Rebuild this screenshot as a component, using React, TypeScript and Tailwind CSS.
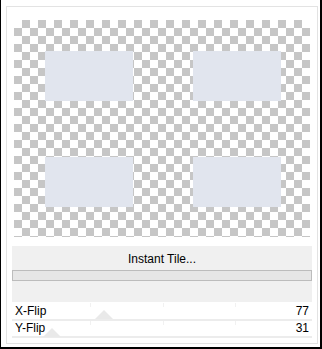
import React from 'react';

const Thumb = ({ x, y }: { x: number; y: number }) => (
  <svg className="absolute" style={{ left: x, top: y }} width="18" height="10" viewBox="0 0 18 10">
    <polygon points="0,10 9,1 18,10" fill="#e9e9e9" />
  </svg>
);

const Tick = ({ x, y }: { x: number; y: number }) => (
  <div className="absolute w-px h-[4px] bg-[#f1f1f1]" style={{ left: x, top: y }} />
);

const Row = ({ label, value, first }: { label: string; value: number; first?: boolean }) => (
  <>
    <div className={`flex justify-between pl-[3px] pr-[3px] leading-[15px] ${first ? 'h-[17px] pt-[2px]' : 'h-[15px]'}`}>
      <span className="relative">{label}</span>
      <span className="relative">{value}</span>
    </div>
    <div className="h-[2px] bg-[#ececec]" />
  </>
);

export default function App() {
  const ticks = [78, 151, 223];
  return (
    <div
      className="w-[322px] h-[349px] bg-white border-l border-r-2 border-b-2 border-black pl-[5px] pt-[6px] text-[12px] text-black"
      style={{ fontFamily: '"Liberation Sans", Arial, sans-serif' }}
    >
      <div className="w-[312px] h-[338px] border border-[#e3e3e3]">
        <div className="ml-[7px] mt-[13px] w-[296px] h-[217px] bg-[conic-gradient(#c6c6c6_25%,#ffffff_0_50%,#c6c6c6_0_75%,#ffffff_0)] bg-[length:16px_16px] pl-[31px] pt-[31px]">
          <div className="grid grid-cols-[88px_88px] gap-x-[60px] gap-y-[56px]">
            <div className="h-[50px] bg-[#e1e5ee]" />
            <div className="h-[50px] bg-[#e1e5ee]" />
            <div className="h-[50px] bg-[#e1e5ee]" />
            <div className="h-[50px] bg-[#e1e5ee]" />
          </div>
        </div>

        <div className="ml-[5px] mt-[9px] w-[300px] h-[56px] bg-[#f0f0f0]">
          <div className="h-[24px] flex items-center justify-center pt-[1px]">Instant Tile...</div>
          <div className="h-[11px] bg-[#e6e6e6] border border-[#bcbcbc]" />
        </div>

        <div className="relative ml-[5px] w-[300px]">
          {ticks.map((t) => (
            <Tick key={'a' + t} x={t} y={1} />
          ))}
          {ticks.map((t) => (
            <Tick key={'b' + t} x={t} y={19} />
          ))}
          <Thumb x={83} y={7} />
          <Thumb x={31} y={25} />
          <Row label="X-Flip" value={77} first />
          <Row label="Y-Flip" value={31} />
        </div>
      </div>
    </div>
  );
}
